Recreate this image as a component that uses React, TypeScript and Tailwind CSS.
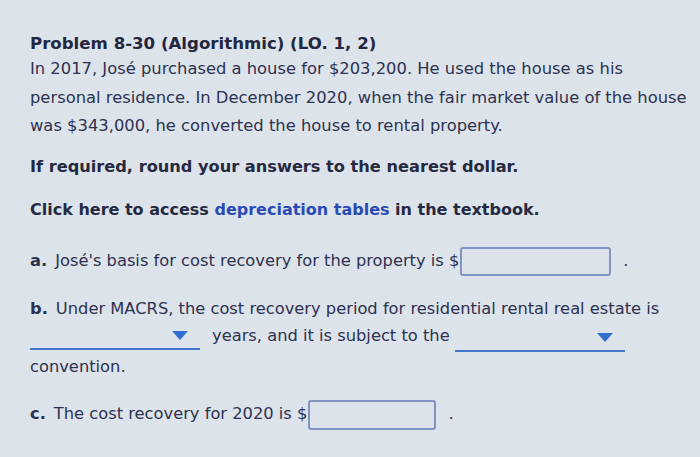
function Dropdown({ height, arrowTop }: { height: string; arrowTop: string }) {
  return (
    <span className={`relative block w-[170px] shrink-0 border-b-2 border-[#3f78c8] ${height}`}>
      <svg className={`absolute right-[12px] ${arrowTop}`} width="16" height="10" viewBox="0 0 16 10">
        <path d="M0 0 H16 L8 9 Z" fill="#2f70d0" />
      </svg>
    </span>
  );
}

export default function App() {
  return (
    <main
      className="h-[457px] w-[700px] overflow-hidden bg-[#dde3ea] pl-[30px] pt-[32px] text-[#2d3250]"
      style={{ fontFamily: '"DejaVu Sans", Verdana, sans-serif' }}
    >
      <h1 className="text-[16.6px] font-bold leading-[24px] text-[#23273f]">
        Problem 8-30 (Algorithmic) (LO. 1, 2)
      </h1>

      <p className="-mt-[1px] text-[16.35px] leading-[28.5px]">
        In 2017, José purchased a house for $203,200. He used the house as his
        <br />
        personal residence. In December 2020, when the fair market value of the house
        <br />
        was $343,000, he converted the house to rental property.
      </p>

      <p className="mt-[13px] text-[16.2px] font-bold leading-[26px] text-[#262a40]">
        If required, round your answers to the nearest dollar.
      </p>

      <p className="mt-[17px] text-[16px] font-bold leading-[26px] text-[#262a40]">
        Click here to access{' '}
        <span className="text-[#2a4bb4]">depreciation tables</span> in the textbook.
      </p>

      <div className="mt-[24px] flex items-center text-[16.3px]">
        <span className="font-bold">a.</span>
        <span className="ml-[8px]">José's basis for cost recovery for the property is $</span>
        <span className="ml-[1px] h-[29px] w-[151px] rounded-[3px] border-2 border-[#8293c2]" />
        <span className="ml-[12px]">.</span>
      </div>

      <div className="mt-[19px] text-[16.3px] leading-[27px]">
        <div>
          <span className="font-bold">b.</span>
          <span className="ml-[8px]">
            Under MACRS, the cost recovery period for residential rental real estate is
          </span>
        </div>
        <div className="flex items-start">
          <Dropdown height="h-[28px]" arrowTop="top-[9px]" />
          <span className="ml-[12px]">years, and it is subject to the</span>
          <span className="ml-[5px]">
            <Dropdown height="h-[30px]" arrowTop="top-[11px]" />
          </span>
        </div>
        <div className="mt-[1px]">convention.</div>
      </div>

      <div className="mt-[20px] flex items-center text-[16.3px]">
        <span className="font-bold">c.</span>
        <span className="ml-[8px]">The cost recovery for 2020 is $</span>
        <span className="ml-[1px] h-[30px] w-[128px] rounded-[3px] border-2 border-[#8293c2]" />
        <span className="ml-[12px]">.</span>
      </div>
    </main>
  );
}
